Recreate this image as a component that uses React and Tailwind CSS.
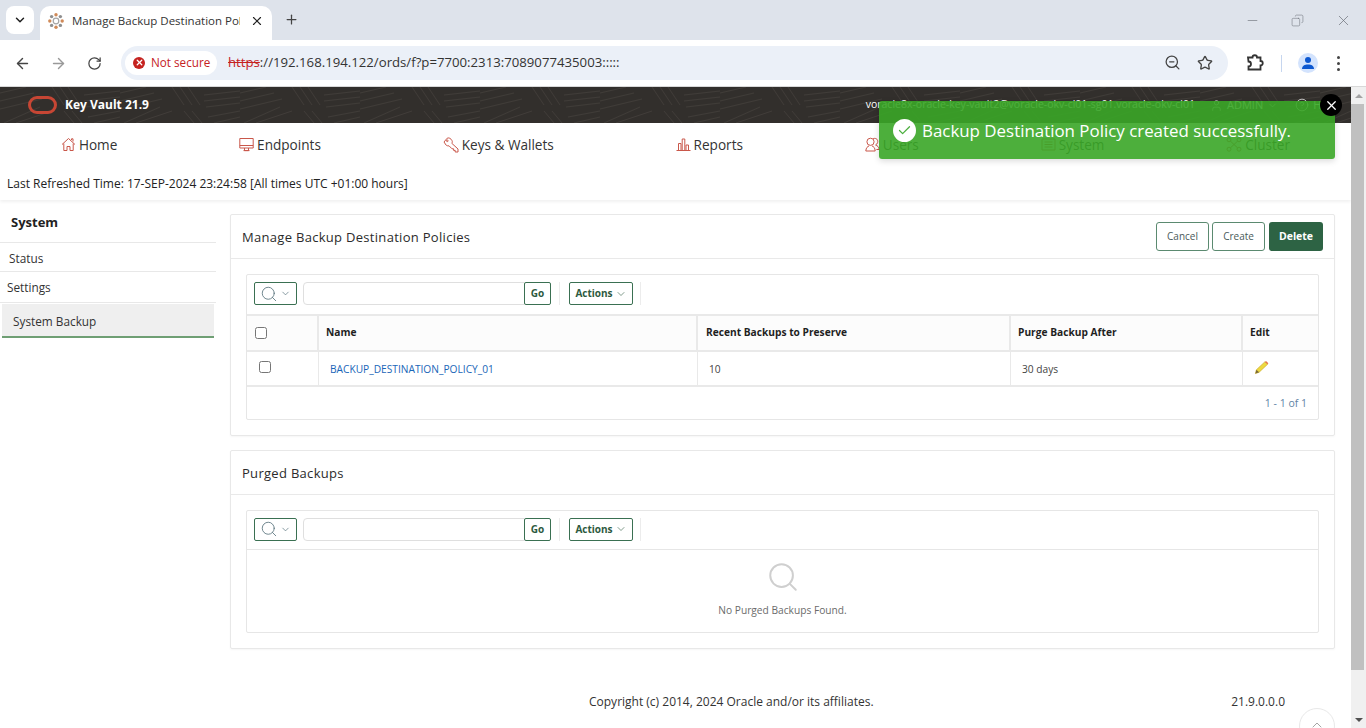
import React from "react";
import { X, Plus, ChevronDown, ArrowLeft, ArrowRight, RotateCw, ZoomOut, Star, Minus, Search, Check, CircleHelp, Copy, ChevronUp, User } from "lucide-react";

const S = { fill: "none", stroke: "currentColor", strokeWidth: 1 };
const HomeI = () => (
  <svg width="15" height="15" viewBox="0 0 15 15" {...S}>
    <path d="M1 7.5L7.5 1.5L14 7.5M2.8 6.5V13.5H6V9.5H9V13.5H12.2V6.5M10.5 3V1.8H12V4.5" />
  </svg>
);
const MonitorI = () => (
  <svg width="15" height="15" viewBox="0 0 15 15" {...S}>
    <path d="M.8 1.5H14.2V11H.8ZM.8 8.5H14.2M5.5 11V13.6H9.5V11M4.5 13.6H10.5" />
  </svg>
);
const KeyI = () => (
  <svg width="16" height="16" viewBox="0 0 16 16" {...S}>
    <path d="M1 5L4.2 1.2C5.4.6 7 1 8 2.2L9 3.6C9.6 4.8 9.3 5.6 8.8 6.3L15 12V15H12.2V13.4H10.6V11.8H9L6 8.8C4.8 9 3.8 8.8 3 8Z" />
    <circle cx="4.3" cy="3.8" r=".8" />
  </svg>
);
const BarsI = () => (
  <svg width="15" height="15" viewBox="0 0 15 15" {...S}>
    <path d="M2.5 13V6.5H5V13M6.2 13V2H8.8V13M10 13V8H12.5V13M.5 13.5H14.5" />
  </svg>
);
const UsersI = () => (
  <svg width="15" height="15" viewBox="0 0 15 15" {...S}>
    <circle cx="5.5" cy="4.8" r="3.6" />
    <path d="M.8 14C1 10.8 2.6 9.4 4 9M7 9C8.6 9.4 10 10.8 10.2 14H.8M8.2 1.6C11.4.6 13.4 3 12.6 5.6C12.2 6.8 11.4 7.6 10.6 8C12.4 8.6 14 10 14.2 12.5H11.4" />
  </svg>
);
const SysI = () => (
  <svg width="15" height="15" viewBox="0 0 15 15" {...S}>
    <path d="M1 2H14V13H1ZM3.5 5H11.5M3.5 7.5H11.5M3.5 10H11.5" />
  </svg>
);
const ClusterI = () => (
  <svg width="16" height="15" viewBox="0 0 16 15" {...S}>
    <circle cx="3" cy="2.8" r="2" /><circle cx="13" cy="2.8" r="2" /><circle cx="3" cy="12.2" r="2" /><circle cx="13" cy="12.2" r="2" />
    <path d="M4.5 4.2L11.5 10.8M11.5 4.2L4.5 10.8" />
  </svg>
);

const NAV = [
  ["Home", HomeI],
  ["Endpoints", MonitorI],
  ["Keys & Wallets", KeyI],
  ["Reports", BarsI],
  ["Users", UsersI],
  ["System", SysI],
  ["Cluster", ClusterI],
];

function Favicon() {
  const dots = [0, 45, 90, 135, 180, 225, 270, 315];
  return (
    <svg width="16" height="16" viewBox="0 0 16 16" className="shrink-0">
      {dots.map((a, i) => (
        <circle key={a} cx={8 + 6.2 * Math.cos((a * Math.PI) / 180)} cy={8 + 6.2 * Math.sin((a * Math.PI) / 180)} r="1.7" fill={i % 2 ? "#8f8f8f" : "#d08a58"} />
      ))}
      <circle cx="8" cy="8" r="2.8" fill="none" stroke="#a5a5a5" strokeWidth="1.2" />
    </svg>
  );
}

function Texture() {
  return (
    <svg className="absolute inset-0 w-full h-full" aria-hidden="true">
      <defs>
        <pattern id="tx" width="120" height="36" patternUnits="userSpaceOnUse">
          <g stroke="#403c38" strokeWidth="1" fill="none">
            <path d="M0 6L26 0M0 14L34 6M0 22L42 12M4 36L40 20M16 36L52 24" />
            <path d="M52 0L64 18M60 0L72 18M68 0L80 18M64 24L74 36M72 24L82 36" />
            <path d="M84 8L120 4M84 14L120 10M86 20L120 16M88 30L120 24M94 36L120 30" />
          </g>
        </pattern>
      </defs>
      <rect width="100%" height="100%" fill="url(#tx)" />
    </svg>
  );
}

function Pencil() {
  return (
    <svg width="15" height="15" viewBox="0 0 16 16">
      <path d="M1.5 14.5L2.5 10.5L11.5 2L14.5 4.5L5.5 13Z" fill="#eed93f" stroke="#c9a92a" strokeWidth=".7" />
      <path d="M11.5 2L12.8 1L15.3 3.4L14.5 4.5Z" fill="#e8764a" />
      <path d="M1.5 14.5L2.5 10.5L5.5 13Z" fill="#7a6a3a" />
    </svg>
  );
}

function Toolbar({ border }) {
  return (
    <div className={`h-[39px] flex items-center pl-[7px] pb-[2px] shrink-0 ${border}`}>
      <button className="w-[43px] h-[23px] border border-[#3a7052] rounded-[2px] flex items-center justify-center gap-[2px] text-[#55707a]">
        <Search size={18} strokeWidth={1.1} />
        <ChevronDown size={11} strokeWidth={1.5} />
      </button>
      <div className="ml-[6px] w-[222px] h-[23px] border border-[#dfdfdf] rounded-l-[4px] bg-white" />
      <button className="w-[27px] h-[23px] -ml-px border border-[#3a7052] rounded-[2px] bg-white text-[10px] font-bold text-[#2d5a40]">Go</button>
      <div className="w-px h-[23px] bg-[#ececec] ml-[8px]" />
      <button className="ml-[9px] w-[64px] h-[23px] border border-[#3a7052] rounded-[2px] flex items-center justify-center gap-[2px] text-[10px] font-bold text-[#2d5a40]">
        Actions <ChevronDown size={12} strokeWidth={1.2} />
      </button>
      <div className="w-px h-[23px] bg-[#ececec] ml-[7px]" />
    </div>
  );
}

function PanelHeader({ title, children }) {
  return (
    <div className="h-[44px] border-b border-[#e9e9e9] flex items-center justify-between pl-[11px] pr-[11px] shrink-0">
      <span className="text-[13px] text-[#2b2b2b] tracking-[0.3px] pt-[2px]">{title}</span>
      {children}
    </div>
  );
}

export default function App() {
  return (
    <div className="relative w-[1366px] h-[728px] overflow-hidden bg-white flex flex-col font-['Open_Sans','Noto_Sans',sans-serif] text-[#222]">
      {/* browser tab strip */}
      <div className="h-[40px] bg-[#dee3eb] flex items-end shrink-0 relative">
        <div className="absolute left-[6px] top-[6px] w-[28px] h-[28px] rounded-[8px] bg-white flex items-center justify-center">
          <ChevronDown size={14} strokeWidth={2.5} className="text-[#1f1f1f]" />
        </div>
        <div className="ml-[40px] w-[232px] h-[34px] bg-white rounded-t-[10px] flex items-center pl-[8px] pr-[8px] pb-[4px]">
          <Favicon />
          <span className="ml-[8px] w-[168px] overflow-hidden whitespace-nowrap text-[11.5px] text-[#333]">Manage Backup Destination Policies</span>
          <X size={14} strokeWidth={2} className="ml-auto text-[#222]" />
        </div>
        <Plus size={15} strokeWidth={2} className="ml-[12px] mb-[13px] text-[#444]" />
        <div className="ml-auto flex items-center h-full pr-[14px] text-[#6a6f77] gap-[31px]">
          <Minus size={15} strokeWidth={1} />
          <Copy size={13} strokeWidth={1} className="-scale-x-100" />
          <X size={17} strokeWidth={1} />
        </div>
      </div>
      {/* browser toolbar */}
      <div className="h-[47px] bg-white border-b border-[#d8d8d8] rounded-t-[8px] flex items-center shrink-0">
        <ArrowLeft size={17} strokeWidth={2} className="ml-[14px] text-[#444]" />
        <ArrowRight size={17} strokeWidth={2} className="ml-[19px] text-[#999]" />
        <RotateCw size={15} strokeWidth={2} className="ml-[20px] text-[#444]" />
        <div className="ml-[19px] w-[1107px] h-[34px] -mt-[1px] rounded-full bg-[#ebf0f8] flex items-center pl-[4px]">
          <div className="h-[24px] w-[92px] bg-white rounded-full flex items-center pl-[8px] gap-[6px] shrink-0">
            <span className="w-[12px] h-[12px] rounded-full bg-[#c5221f] flex items-center justify-center"><X size={9} strokeWidth={3.5} className="text-white" /></span>
            <span className="text-[11.7px] text-[#c5221f] whitespace-nowrap">Not secure</span>
          </div>
          <span className="ml-[11px] text-[13.2px] text-[#333] whitespace-nowrap"><span className="text-[#c5221f] line-through">https</span>://192.168.194.122/ords/f?p=7700:2313:7089077435003:::::</span>
          <ZoomOut size={17} strokeWidth={1.8} className="ml-auto mr-[1px] text-[#444]" />
          <Star size={16} strokeWidth={2} className="ml-[15px] mr-[15px] text-[#444]" />
        </div>
        <svg width="20" height="20" viewBox="0 0 20 20" fill="none" stroke="#333" strokeWidth="1.8" className="ml-[17px]">
          <path d="M3 4.5H7.5A2.2 2.2 0 0 1 12 4.5H15.5V8A2.2 2.2 0 0 1 15.5 12.5V16.5H3.5V13.5A2.5 2.5 0 0 0 3.5 8.5Z" />
        </svg>
        <div className="ml-[16px] w-px h-[17px] bg-[#c6d6ef]" />
        <div className="ml-[16px] w-[20px] h-[20px] rounded-full bg-[#d3e3fd] flex items-center justify-center">
          <svg width="14" height="14" viewBox="0 0 14 14" fill="#0b57d0"><circle cx="7" cy="4" r="3" /><path d="M1 13C1 9.8 3.6 8.4 7 8.4S13 9.8 13 13Z" /></svg>
        </div>
        <div className="ml-[19px] flex flex-col gap-[3px]">
          <span className="w-[3px] h-[3px] rounded-full bg-[#444]" />
          <span className="w-[3px] h-[3px] rounded-full bg-[#444]" />
          <span className="w-[3px] h-[3px] rounded-full bg-[#444]" />
        </div>
      </div>

      {/* page and scrollbar */}
      <div className="flex flex-1 min-h-0">
        <div className="w-[1351px] shrink-0 flex flex-col min-h-0 overflow-hidden">
          <header className="relative h-[36px] bg-[#322f2c] shrink-0 flex items-center pl-[28px] pr-[14px] text-white overflow-hidden">
            <Texture />
            <div className="relative w-[29px] h-[18px] rounded-[9px] border-[3px] border-[#c74634]" />
            <span className="relative ml-[8px] text-[12px] font-bold">Key Vault 21.9</span>
            <span className="relative ml-auto text-[10.5px] whitespace-nowrap">voracle8x-oracle-key-vault2@voracle-okv-cl01-sg01.voracle-okv-cl01</span>
            <User size={13} strokeWidth={1.2} className="relative ml-[15px]" />
            <span className="relative ml-[4px] text-[11px]">ADMIN</span>
            <ChevronDown size={11} strokeWidth={1.2} className="relative ml-[4px]" />
            <CircleHelp size={14} strokeWidth={1.2} className="relative ml-[17px]" />
            <span className="relative ml-[4px] text-[11px]">Help</span>
          </header>

          <nav className="h-[42px] pt-[2px] flex items-center justify-around shrink-0">
            {NAV.map(([label, Icon]) => (
              <div key={label} className="flex items-center gap-[3px] text-[13.6px] text-[#333] whitespace-nowrap">
                <span className="text-[#c9574a] flex"><Icon /></span>
                <span>{label}</span>
              </div>
            ))}
          </nav>

          <div className="h-[35px] flex items-center pl-[7px] pt-[3px] text-[12px] text-[#222] shrink-0 shadow-[0_2px_3px_rgba(0,0,0,0.06)] whitespace-nowrap">
            Last Refreshed Time: 17-SEP-2024 23:24:58 [All times UTC +01:00 hours]
          </div>

          <div className="flex flex-1 min-h-0">
            <aside className="w-[216px] shrink-0 text-[11.8px] text-[#333]">
              <div className="h-[43px] pl-[11px] pt-[3px] flex items-center border-b border-[#e8e8e8] text-[13px] font-bold text-[#222]">System</div>
              <div className="h-[29px] pl-[9px] pt-[3px] flex items-center border-b border-[#e8e8e8]">Status</div>
              <div className="h-[31px] pl-[7px] pt-[2px] flex items-center border-b border-[#e8e8e8]">Settings</div>
              <div className="ml-[2px] mr-[2px] mt-[1px] h-[34px] pl-[11px] pt-[4px] flex items-center bg-[#efefef] border-b-2 border-[#6f9f74]">System Backup</div>
            </aside>

            <main className="w-[1105px] ml-[14px] pt-[14px] shrink-0 flex flex-col">
              <section className="h-[222px] border border-[#e8e8e8] rounded-[2px] shadow-[0_1px_2px_rgba(0,0,0,0.04)] flex flex-col">
                <PanelHeader title="Manage Backup Destination Policies">
                  <div className="flex gap-[3px]">
                    <button className="w-[53px] h-[29px] border border-[#5b8a70] rounded-[3px] text-[10px] text-[#4a5a5a]">Cancel</button>
                    <button className="w-[53px] h-[29px] border border-[#5b8a70] rounded-[3px] text-[10px] text-[#4a5a5a]">Create</button>
                    <button className="ml-[1px] w-[54px] h-[29px] rounded-[3px] bg-[#2d6344] text-[10.5px] font-bold text-white">Delete</button>
                  </div>
                </PanelHeader>
                <div className="mx-[15px] mt-[15px] h-[146px] border border-[#e6e6e6] rounded-[2px] flex flex-col">
                  <Toolbar border="" />
                  <div className="h-[38px] grid grid-cols-[72px_379px_313px_232px_75px] border-y-2 border-[#e9e9e9] bg-[#fcfcfc] text-[10.2px] font-bold text-[#1f1f1f] shrink-0">
                    <div className="border-r-2 border-[#e9e9e9] pl-[8px] flex items-center"><input type="checkbox" readOnly className="w-[12px] h-[12px]" /></div>
                    <div className="border-r-2 border-[#e9e9e9] pl-[7px] flex items-center">Name</div>
                    <div className="border-r-2 border-[#e9e9e9] pl-[8px] flex items-center">Recent Backups to Preserve</div>
                    <div className="border-r-2 border-[#e9e9e9] pl-[7px] flex items-center">Purge Backup After</div>
                    <div className="pl-[7px] flex items-center">Edit</div>
                  </div>
                  <div className="h-[35px] grid grid-cols-[72px_379px_313px_232px_75px] border-b-2 border-[#e9e9e9] text-[10.2px] text-[#444] shrink-0">
                    <div className="border-r border-[#e9e9e9] pl-[12px] pb-[4px] flex items-center"><input type="checkbox" readOnly className="w-[12px] h-[12px]" /></div>
                    <div className="border-r border-[#e9e9e9] pl-[11px] pt-[2px] flex items-center text-[#1a66b8]">BACKUP_DESTINATION_POLICY_01</div>
                    <div className="border-r border-[#e9e9e9] pl-[11px] pt-[2px] flex items-center">10</div>
                    <div className="border-r border-[#e9e9e9] pl-[11px] pt-[2px] flex items-center">30 days</div>
                    <div className="pl-[11px] pb-[3px] flex items-center"><Pencil /></div>
                  </div>
                  <div className="flex-1 flex items-center justify-end pr-[11px] pt-[2px] text-[10.5px] text-[#5f83a5]">1 - 1 of 1</div>
                </div>
              </section>

              <section className="mt-[14px] h-[199px] border border-[#e8e8e8] rounded-[2px] shadow-[0_1px_2px_rgba(0,0,0,0.04)] flex flex-col">
                <PanelHeader title="Purged Backups" />
                <div className="mx-[15px] mt-[15px] h-[123px] border border-[#e6e6e6] rounded-[2px] flex flex-col">
                  <Toolbar border="border-b border-[#e6e6e6]" />
                  <div className="flex-1 flex flex-col items-center pt-[10px] text-[#6b6b6b]">
                    <Search size={34} strokeWidth={1.4} className="text-[#cfcfcf]" />
                    <span className="mt-[9px] text-[10.2px]">No Purged Backups Found.</span>
                  </div>
                </div>
              </section>

              <footer className="w-[1105px] mt-[44px] relative flex items-center text-[12px] text-[#333]">
                <span className="ml-[359px]">Copyright (c) 2014, 2024 Oracle and/or its affiliates.</span>
                <span className="ml-auto mr-[50px]">21.9.0.0.0</span>
              </footer>
            </main>
          </div>
        </div>

        {/* scrollbar */}
        <div className="w-[15px] bg-[#f0f0f0] flex flex-col items-center shrink-0">
          <div className="h-[17px] flex items-center justify-center text-[#a3a3a3]"><span className="w-0 h-0 border-x-[4px] border-x-transparent border-b-[4px] border-b-current" /></div>
          <div className="w-[13px] h-[566px] bg-[#c0c0c0] mr-[2px]" />
          <div className="flex-1 flex items-end pb-[6px]"><span className="w-0 h-0 border-x-[4px] border-x-transparent border-t-[4px] border-t-[#505050]" /></div>
        </div>
      </div>

      {/* overlays */}
      <div className="absolute left-[879px] top-[101px] w-[456px] h-[58px] rounded-[3px] bg-[#3aa627]/90 shadow-[0_2px_6px_rgba(0,0,0,0.15)] flex items-center pl-[14px] pt-[1px] text-white">
        <span className="w-[23px] h-[23px] rounded-full bg-white flex items-center justify-center"><Check size={15} strokeWidth={2} className="text-[#4caf3f]" /></span>
        <span className="ml-[6px] text-[16.9px] whitespace-nowrap">Backup Destination Policy created successfully.</span>
      </div>
      <div className="absolute left-[1320px] top-[94px] w-[22px] h-[22px] rounded-full bg-black flex items-center justify-center">
        <X size={15} strokeWidth={2} className="text-white" />
      </div>
      <div className="absolute left-[1299px] top-[708px] w-[36px] h-[36px] rounded-full border border-[#e8e8e8] bg-white flex items-start justify-center pt-[8px]">
        <ChevronUp size={16} strokeWidth={1} className="text-[#777]" />
      </div>
    </div>
  );
}
